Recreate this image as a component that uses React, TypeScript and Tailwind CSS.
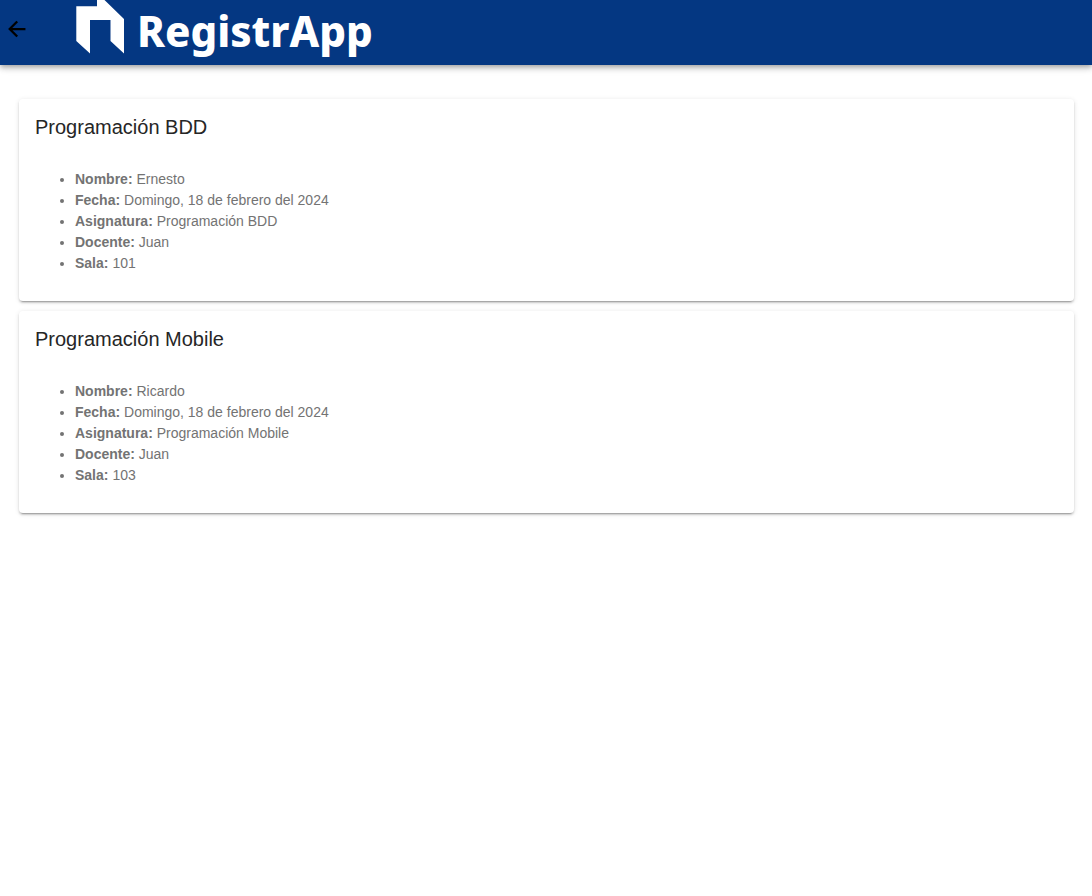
const records = [
  {
    title: "Programación BDD",
    fields: [
      ["Nombre", "Ernesto"],
      ["Fecha", "Domingo, 18 de febrero del 2024"],
      ["Asignatura", "Programación BDD"],
      ["Docente", "Juan"],
      ["Sala", "101"],
    ],
  },
  {
    title: "Programación Mobile",
    fields: [
      ["Nombre", "Ricardo"],
      ["Fecha", "Domingo, 18 de febrero del 2024"],
      ["Asignatura", "Programación Mobile"],
      ["Docente", "Juan"],
      ["Sala", "103"],
    ],
  },
];

function Logo() {
  return (
    <div className="flex items-start gap-3">
      <svg className="h-[54px] w-[50px]" viewBox="0 0 50 54" fill="#fff" aria-hidden="true">
        <path d="M1.3 6.3H22V0H29.5L49 19V53.5L35.5 41V20H15V53.5L1.3 41Z" />
      </svg>
      <span className="font-['Noto_Sans',sans-serif] text-[42px] leading-[62px] font-extrabold text-white">
        RegistrApp
      </span>
    </div>
  );
}

export default function App() {
  return (
    <div className="min-h-screen bg-white font-['Liberation_Sans',Arial,sans-serif]">
      <header className="flex h-[65px] items-start bg-[#043782] shadow-[0_2px_4px_-1px_rgba(0,0,0,0.2),0_4px_5px_0_rgba(0,0,0,0.14),0_1px_10px_0_rgba(0,0,0,0.12)]">
        <button type="button" aria-label="Volver" className="flex h-[58px] w-[75px] items-center pl-[5px] text-black">
          <svg className="size-6" viewBox="0 0 512 512" fill="none" stroke="currentColor" strokeWidth="48" strokeLinecap="square" strokeMiterlimit="10" aria-hidden="true">
            <path d="M244 400L100 256l144-144M120 256h292" />
          </svg>
        </button>
        <Logo />
      </header>
      <main className="flex flex-col gap-[10px] pt-[34px] pr-[18px] pl-[19px]">
        {records.map((r) => (
          <article
            key={r.title}
            className="rounded-sm px-4 pt-4 pb-[27px] shadow-[0_3px_1px_-2px_rgba(0,0,0,0.2),0_2px_2px_0_rgba(0,0,0,0.14),0_1px_5px_0_rgba(0,0,0,0.12)]"
          >
            <h2 className="text-xl leading-6 text-[#262626]">{r.title}</h2>
            <ul className="mt-[30px] list-disc pl-10 text-sm leading-[21px] text-[#737373]">
              {r.fields.map(([label, value]) => (
                <li key={label}>
                  <strong>{label}:</strong> {value}
                </li>
              ))}
            </ul>
          </article>
        ))}
      </main>
    </div>
  );
}
